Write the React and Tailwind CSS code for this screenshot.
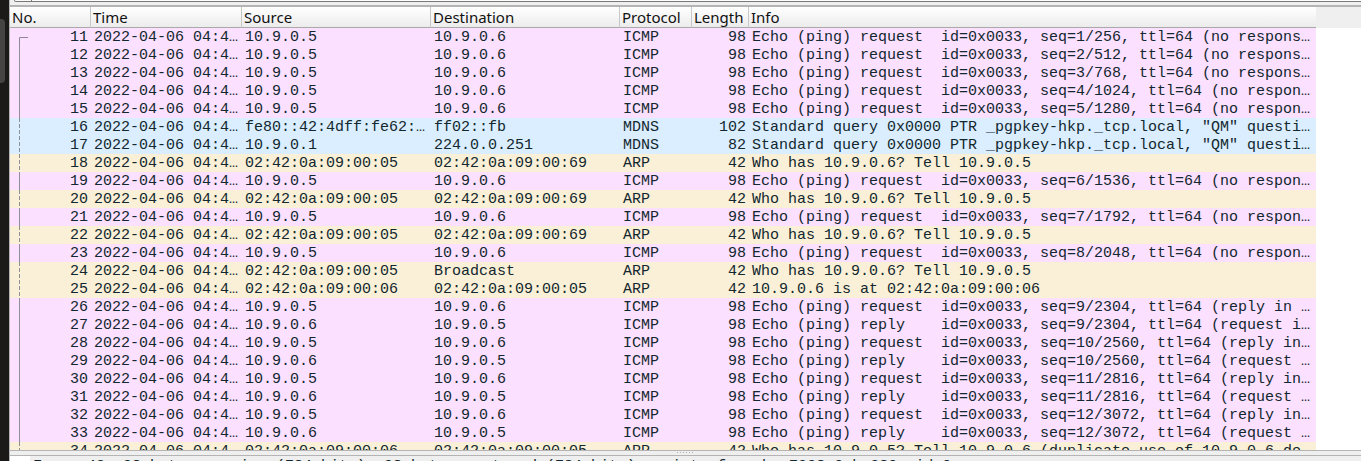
const COLUMNS = ["No.", "Time", "Source", "Destination", "Protocol", "Length", "Info"];

const A = "10.9.0.5";
const B = "10.9.0.6";
const M5 = "02:42:0a:09:00:05";
const M6 = "02:42:0a:09:00:06";
const M69 = "02:42:0a:09:00:69";
const TIME = "2022-04-06 04:48:21";
const ASK = "Who has 10.9.0.6? Tell 10.9.0.5";

const ping = (kind, seq, note) =>
  `Echo (ping) ${kind.padEnd(8)} id=0x0033, seq=${seq}, ttl=64 (${note})`;
const lost = (seq) => ping("request", seq, "no response found!)");
const request = (seq, n) => ping("request", seq, `reply in ${n}`);
const reply = (seq, n) => ping("reply", seq, `request in ${n}`);
const MDNS = 'Standard query 0x0000 PTR _pgpkey-hkp._tcp.local, "QM" question';

const PACKETS = [
  [11, A, B, "ICMP", 98, lost("1/256")],
  [12, A, B, "ICMP", 98, lost("2/512")],
  [13, A, B, "ICMP", 98, lost("3/768")],
  [14, A, B, "ICMP", 98, lost("4/1024")],
  [15, A, B, "ICMP", 98, lost("5/1280")],
  [16, "fe80::42:4dff:fe62:7a1c", "ff02::fb", "MDNS", 102, MDNS],
  [17, "10.9.0.1", "224.0.0.251", "MDNS", 82, MDNS],
  [18, M5, M69, "ARP", 42, ASK],
  [19, A, B, "ICMP", 98, lost("6/1536")],
  [20, M5, M69, "ARP", 42, ASK],
  [21, A, B, "ICMP", 98, lost("7/1792")],
  [22, M5, M69, "ARP", 42, ASK],
  [23, A, B, "ICMP", 98, lost("8/2048")],
  [24, M5, "Broadcast", "ARP", 42, ASK],
  [25, M6, M5, "ARP", 42, "10.9.0.6 is at 02:42:0a:09:00:06"],
  [26, A, B, "ICMP", 98, request("9/2304", 27)],
  [27, B, A, "ICMP", 98, reply("9/2304", 26)],
  [28, A, B, "ICMP", 98, request("10/2560", 29)],
  [29, B, A, "ICMP", 98, reply("10/2560", 28)],
  [30, A, B, "ICMP", 98, request("11/2816", 31)],
  [31, B, A, "ICMP", 98, reply("11/2816", 30)],
  [32, A, B, "ICMP", 98, request("12/3072", 33)],
  [33, B, A, "ICMP", 98, reply("12/3072", 32)],
  [34, M6, M5, "ARP", 42, "Who has 10.9.0.5? Tell 10.9.0.6 (duplicate use of 10.9.0.6 detected!)"],
];

const ROW_COLOR = {
  ICMP: "bg-[#fce0ff]",
  MDNS: "bg-[#daeeff]",
  ARP: "bg-[#faf0d7]",
};

function StreamMark({ first, solid }) {
  return (
    <svg width="18" height="18" viewBox="0 0 18 18" className="block" aria-hidden="true">
      {first ? (
        <path d="M18 9.5H9.5V18" fill="none" stroke="#8f8796" />
      ) : (
        <path d="M9.5 0V18" fill="none" stroke="#8f8f96" strokeDasharray={solid ? undefined : "4 2"} />
      )}
    </svg>
  );
}

function PacketRow({ packet }) {
  const [no, source, destination, protocol, length, info] = packet;
  const cell = "overflow-hidden text-ellipsis whitespace-pre p-0 pl-[3px] pr-0.5 pt-0.5";
  return (
    <tr className={`h-[18px] leading-4 ${ROW_COLOR[protocol]}`}>
      <td className="p-0">
        <div className="flex h-[18px] items-start justify-between pr-[3px]">
          <StreamMark first={no === 11} solid={protocol === "ICMP"} />
          <span className="pt-0.5">{no}</span>
        </div>
      </td>
      <td className={cell}>{TIME}</td>
      <td className={cell}>{source}</td>
      <td className={cell}>{destination}</td>
      <td className={cell}>{protocol}</td>
      <td className="p-0 pr-[3px] pt-0.5 text-right">{length}</td>
      <td className={cell}>{info}</td>
    </tr>
  );
}

export default function App() {
  return (
    <div className="flex h-screen overflow-hidden bg-[#efefef] text-[#12272e]">
      <aside className="w-[9px] shrink-0 bg-[#1b1a18] pt-[19px]">
        <div className="h-16 w-[5px] rounded-r-sm bg-[#454442]" />
      </aside>
      <main className="flex min-w-0 flex-1 flex-col border-l border-[#b4b4b4] font-['Liberation_Mono',monospace] text-[15px] leading-[18px]">
        <div className="flex h-[5px] shrink-0 pl-1">
          <div className="h-0.5 w-[18px] rounded-bl-sm border-b border-l border-r border-[#777a75] bg-[#fafafa]" />
          <div className="h-0.5 flex-1 border-b border-[#777a75] bg-white" />
        </div>
        <section className="min-h-0 flex-1 overflow-hidden border-b border-t-2 border-b-[#b4b4b4] border-t-[#b4b4b4] bg-white">
          <div className="flex">
            <div className="min-w-0 flex-1">
              <table className="w-full table-fixed border-separate border-spacing-0">
                <colgroup>
                  <col className="w-[81px]" />
                  <col className="w-[151px]" />
                  <col className="w-[189px]" />
                  <col className="w-[189px]" />
                  <col className="w-[72px]" />
                  <col className="w-[57px]" />
                  <col />
                </colgroup>
                <thead>
                  <tr className="h-[21px] bg-linear-to-b from-white to-[#ebebeb] text-left font-['Noto_Sans',sans-serif] text-[15px] leading-5 text-[#111111]">
                    {COLUMNS.map((name) => (
                      <th
                        key={name}
                        scope="col"
                        className="border-b border-r border-b-[#a9a9a9] border-r-[#c8c8c8] p-0 pl-0.5 font-normal last:border-r-0"
                      >
                        {name}
                      </th>
                    ))}
                  </tr>
                </thead>
                <tbody>
                  {PACKETS.map((packet) => (
                    <PacketRow key={packet[0]} packet={packet} />
                  ))}
                </tbody>
              </table>
            </div>
            <div className="h-[21px] w-[45px] shrink-0 bg-[#efefef]" />
          </div>
        </section>
        <div className="flex h-1 shrink-0 items-center justify-center pr-px">
          <svg width="18" height="4" viewBox="0 0 18 4" aria-hidden="true">
            <path d="M1 1.5H18" stroke="#b0b0b0" strokeDasharray="1 2" />
          </svg>
        </div>
        <section className="flex h-[6px] shrink-0 overflow-hidden border-t border-[#b4b4b4]">
          <div className="w-5 shrink-0 bg-white" />
          <p className="truncate whitespace-pre pl-[3px] pt-0.5">
            Frame 42: 98 bytes on wire (784 bits), 98 bytes captured (784 bits) on interface br-7298c2cbe380, id 0
          </p>
        </section>
      </main>
    </div>
  );
}
